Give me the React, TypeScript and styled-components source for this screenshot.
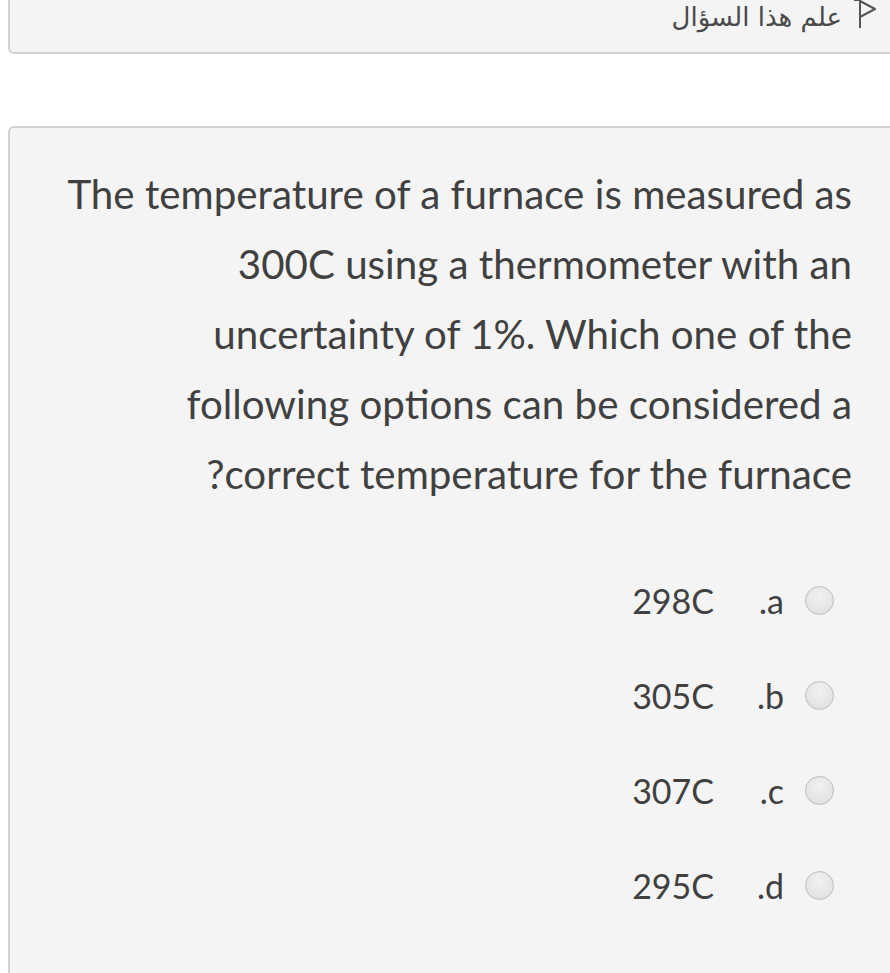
import * as React from "react";
import styled, { createGlobalStyle } from "styled-components";

const GlobalStyle = createGlobalStyle`
  html, body {
    margin: 0;
    padding: 0;
    background: #ffffff;
    overflow: hidden;
  }
  body {
    font-family: "Lato", "Open Sans", sans-serif;
    color: #404040;
  }
`;

const Page = styled.div`
  display: flex;
  flex-direction: column;
  gap: 72px;
  padding-left: 8px;
  width: calc(100% + 30px);
  box-sizing: border-box;
`;

const Card = styled.div`
  background: #f4f4f4;
  border: 2px solid #d2d2d2;
  border-radius: 6px;
  box-sizing: border-box;
  direction: rtl;
`;

const InfoCard = styled(Card)`
  margin-top: -40px;
  height: 94px;
  display: flex;
  align-items: flex-end;
  padding: 0 42px 22px 0;
`;

const FlagRow = styled.div`
  display: flex;
  align-items: flex-end;
  gap: 10px;
  font-family: "DejaVu Sans", sans-serif;
  font-size: 26px;
  color: #4a4a4a;
  line-height: 1;
`;

const QuestionCard = styled(Card)`
  min-height: 900px;
  padding: 31px 66px 0 56px;
`;

const QuestionText = styled.p`
  margin: 0;
  font-size: 40.3px;
  line-height: 70px;
  text-align: right;
`;

const Answers = styled.div`
  display: flex;
  flex-direction: column;
  gap: 48px;
  margin-top: 68px;
  padding-right: 18px;
`;

const Answer = styled.label`
  display: flex;
  align-items: center;
  height: 47px;
  font-size: 34px;
`;

const Radio = styled.span`
  width: 29px;
  height: 29px;
  border-radius: 50%;
  border: 1.5px solid #bdbdbd;
  background: radial-gradient(circle at 50% 35%, #f2f2f2, #dcdcdc);
  box-sizing: border-box;
  margin-left: 21px;
  flex-shrink: 0;
`;

const AnswerNumber = styled.span`
  display: inline-block;
  width: 70px;
  text-align: right;
`;

const AnswerValue = styled.span``;

const FlagIcon = () => (
  <svg width="24" height="30" viewBox="0 0 24 30" fill="none" stroke="#555" strokeWidth="2" strokeLinejoin="round">
    <path d="M8 0 L8 28" />
    <path d="M8 1 L23 9 L8 17" />
    <path d="M2 0 L8 0" />
  </svg>
);

const options = [
  { n: "a", v: "298C" },
  { n: "b", v: "305C" },
  { n: "c", v: "307C" },
  { n: "d", v: "295C" },
];

export default function App() {
  return (
    <>
      <GlobalStyle />
      <Page>
        <InfoCard>
          <FlagRow>
            <FlagIcon />
            <span>علم هذا السؤال</span>
          </FlagRow>
        </InfoCard>
        <QuestionCard>
          <QuestionText>
            The temperature of a furnace is measured as 300C using a thermometer with an uncertainty of 1%. Which one of the following options can be considered a correct temperature for the furnace?
          </QuestionText>
          <Answers>
            {options.map((o) => (
              <Answer key={o.n}>
                <Radio />
                <AnswerNumber>{o.n}.</AnswerNumber>
                <AnswerValue>{o.v}</AnswerValue>
              </Answer>
            ))}
          </Answers>
        </QuestionCard>
      </Page>
    </>
  );
}
